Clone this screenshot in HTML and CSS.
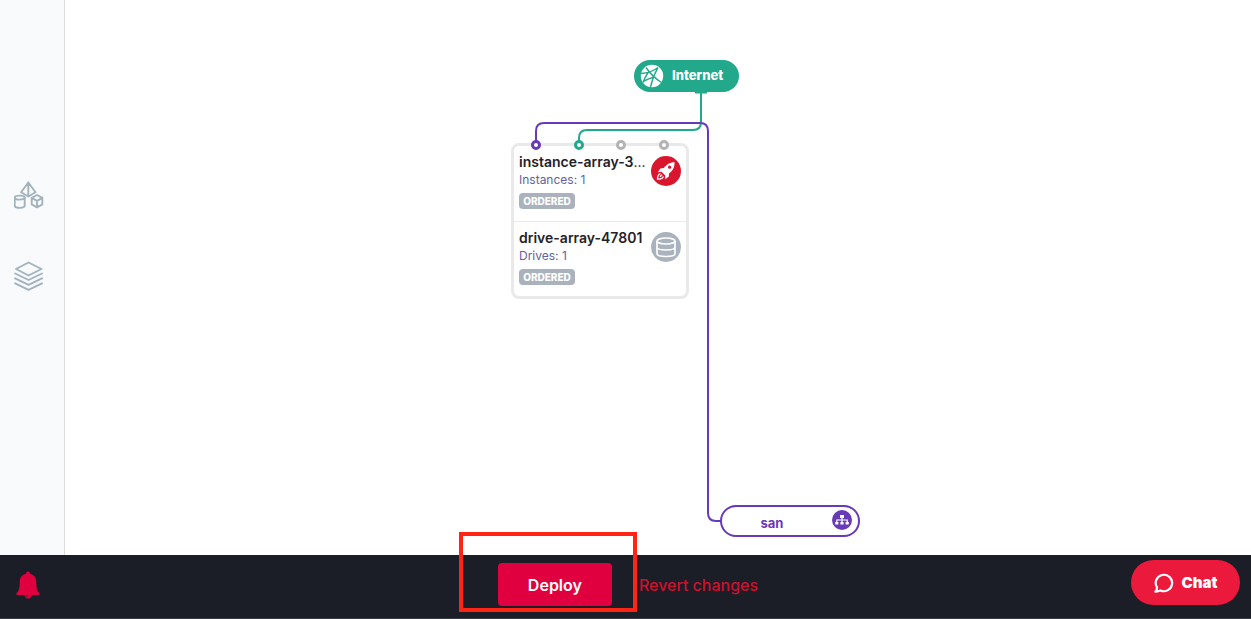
FILE: index.html
```
<!DOCTYPE html>
<html lang="en">
  <head>
    <meta charset="UTF-8" />
    <meta name="viewport" content="width=device-width, initial-scale=1.0" />
    <title>Infrastructure editor</title>
    <link rel="stylesheet" href="styles.css">
  </head>
  <body>
    <main class="workspace">
      <nav class="sidebar">
        <button type="button" class="tool" aria-label="Resources">
          <svg width="30" height="30" viewBox="0 0 30 30" fill="none" stroke="#a3b3bd" stroke-width="1.9" stroke-linejoin="round" stroke-linecap="round">
            <path d="M14.3 1.5L7.1 11.3L14.3 15.5L21.5 11.3ZM14.3 1.5V15.2" />
            <ellipse cx="5.7" cy="16.6" rx="5" ry="2" />
            <path d="M.7 16.6V24.6C.7 27.6 10.7 27.6 10.7 24.6V16.6" />
            <path d="M23 14L28.3 16.8V23.4L23 26.4L17.7 23.4V16.8ZM17.7 16.8L23 19.8L28.3 16.8M23 19.8V26.4" />
          </svg>
        </button>
        <button type="button" class="tool" aria-label="Layers">
          <svg width="30" height="30" viewBox="0 0 30 30" fill="none" stroke="#a3b3bd" stroke-width="1.9" stroke-linejoin="round" stroke-linecap="round">
            <path d="M14.5 1.5L27.5 8L14.5 14.5L2 8Z" />
            <path d="M1.2 12.5L14.5 19L28 12.5M1.2 17.3L14.5 23.8L28 17.3M1.2 22.3L14.5 28.8L28 22.3" />
          </svg>
        </button>
      </nav>

      <section class="canvas">
        <!-- connections between the nodes -->
        <svg class="links" width="820" height="555" fill="none" stroke-width="2">
          <path d="M630 92H642" stroke="#22a88b" stroke-width="3" />
          <path d="M636 92V122Q636 130 628 130H522Q514 130 514 138V145" stroke="#22a88b" />
          <path d="M471 145V131Q471 123 479 123H635Q643 123 643 131V513Q643 521 651 521H656" stroke="#673ab7" />
        </svg>

        <div class="node internet">
          <svg width="24" height="24" viewBox="0 0 24 24">
            <circle cx="12" cy="12" r="11.2" fill="#fff" />
            <path d="M1 9.5Q11 9 18 3.5M6 3.5Q12.5 13 21.5 18.5M18 3.5Q13 12 10.5 23M8.5 8Q5 13 3 18.5M3 17.5Q9 14.5 14 13" fill="none" stroke="#22a88b" stroke-width="1.4" />
          </svg>
          <span>Internet</span>
        </div>

        <div class="node server">
          <div class="item">
            <div class="info">
              <h2>instance-array-3<span class="more">...</span></h2>
              <p>Instances: 1</p>
              <span class="badge">ORDERED</span>
            </div>
            <svg class="icon" width="30" height="30" viewBox="0 0 30 30">
              <circle cx="15" cy="15" r="15" fill="#d9162e" />
              <path d="M23.5 6.2C18.5 6.2 15.5 8.5 12.8 12L9.3 12.5L6.8 16.2L10.5 15.8L14.3 19.5L14 23.2L17.7 20.7L18.2 17.2C21.7 14.5 23.8 11.5 23.5 6.2Z" fill="#fff" />
              <circle cx="18.6" cy="11.2" r="1.6" fill="#d9162e" />
              <path d="M9.5 17.5Q6.5 18.5 6.5 23.2Q11.5 23.3 12.5 20.5M9 20.8L11 18.8" fill="none" stroke="#fff" stroke-width="1.3" />
            </svg>
          </div>
          <div class="item">
            <div class="info">
              <h2>drive-array-47801</h2>
              <p>Drives: 1</p>
              <span class="badge">ORDERED</span>
            </div>
            <svg class="icon" width="30" height="30" viewBox="0 0 30 30">
              <circle cx="15" cy="15" r="15" fill="#a9b2bd" />
              <g fill="none" stroke="#fff" stroke-width="1.6">
                <ellipse cx="15" cy="9" rx="9" ry="3" />
                <path d="M6 9V21.5C6 25.5 24 25.5 24 21.5V9M6 15C6 19 24 19 24 15" />
              </g>
            </svg>
          </div>
          <span class="port port-san"></span>
          <span class="port port-wan"></span>
          <span class="port port-3"></span>
          <span class="port port-4"></span>
        </div>

        <div class="node san">
          <span>san</span>
          <svg width="20" height="20" viewBox="0 0 20 20">
            <circle cx="10" cy="10" r="10" fill="#673ab7" />
            <path d="M10 7V13M4.8 13V10H15.2V13" fill="none" stroke="#fff" stroke-width="1.2" />
            <path d="M8 5H12V8H8ZM3.2 12H6.4V14.6H3.2ZM8.4 12H11.6V14.6H8.4ZM13.6 12H16.8V14.6H13.6Z" fill="#fff" />
          </svg>
        </div>
      </section>
    </main>

    <footer class="footer">
      <button type="button" class="bell" aria-label="Notifications">
        <svg width="24" height="28" viewBox="0 0 24 28">
          <path d="M12 .5C13.3 .5 14 1.4 13.9 2.8C18.5 3.8 20.3 7.2 20.3 11.5C20.3 18 21.5 20.5 23.5 22.2C24.2 23.3 23.6 24 22.5 24H1.5C.4 24-.2 23.3.5 22.2C2.5 20.5 3.7 18 3.7 11.5C3.7 7.2 5.5 3.8 10.1 2.8C10 1.4 10.7 .5 12 .5Z" fill="#e0003f" />
          <circle cx="12" cy="24.4" r="3.1" fill="#e0003f" />
          <path d="M10.3 24Q10.5 25.8 12 26" fill="none" stroke="#1b1e27" />
        </svg>
      </button>
      <div class="actions">
        <div class="deploy-wrap">
          <button type="button" class="deploy">Deploy</button>
          <div class="highlight"></div>
        </div>
        <button type="button" class="revert">Revert changes</button>
      </div>
      <button type="button" class="chat">
        <svg width="20" height="20" viewBox="0 0 20 20" fill="none" stroke="#fff" stroke-width="2.2" stroke-linejoin="round">
          <path d="M3 14.4A8.2 8.2 0 1 1 6.4 17.4Q4 18.8 1.4 18.6Q3.2 16.8 3 14.4Z" />
        </svg>
        Chat
      </button>
    </footer>
  </body>
</html>
```
FILE: styles.css
```
* {
  box-sizing: border-box;
}
body {
  margin: 0;
  min-height: 100vh;
  display: flex;
  flex-direction: column;
  font-family: "Inter", sans-serif;
  background-color: #fff;
}
button {
  padding: 0;
  border: none;
  background: none;
  font-family: inherit;
  cursor: pointer;
}
svg {
  display: block;
  flex-shrink: 0;
}
.workspace {
  flex: 1;
  display: flex;
}
.sidebar {
  display: flex;
  flex-direction: column;
  align-items: flex-start;
  gap: 50px;
  width: 65px;
  padding: 181px 0 0 14px;
  background-color: #f8fafc;
  border-right: 1px solid #d9dbdd;
}
.canvas {
  position: relative;
  flex: 1;
  overflow: hidden;
}
.links {
  position: absolute;
  top: 0;
  left: 0;
}
.node {
  position: absolute;
}
.internet {
  top: 60px;
  left: 569px;
  display: flex;
  align-items: center;
  gap: 8px;
  height: 32px;
  padding: 0 16px 0 6px;
  border-radius: 16px;
  background-color: #22a88b;
  color: #fff;
  font-size: 13px;
  font-weight: 800;
}
.internet span {
  padding-bottom: 3px;
}
.server {
  top: 143px;
  left: 446px;
  width: 178px;
  border: 3px solid #e9e9e9;
  border-radius: 8px;
  background-color: #fff;
}
.item {
  display: flex;
  justify-content: space-between;
  height: 75px;
  padding: 7px 5px 0;
}
.item + .item {
  border-top: 1px solid #e9e9e9;
}
.info {
  width: 130px;
}
.info h2 {
  margin: 0;
  white-space: nowrap;
  color: #1f2227;
  font-size: 14px;
  font-weight: 600;
  line-height: 18px;
}
.info .more {
  font-weight: 400;
}
.info p {
  margin: 0 0 4px;
  color: #62629c;
  font-size: 12px;
  line-height: 18px;
}
.icon {
  margin-top: 3px;
}
.badge {
  display: block;
  width: 56px;
  border-radius: 4px;
  background-color: #a9b2bd;
  color: #fff;
  font-size: 10px;
  font-weight: 800;
  line-height: 16px;
  text-align: center;
}
.port {
  position: absolute;
  top: -6px;
  width: 10px;
  height: 10px;
  border: 3px solid #b3b3b3;
  border-radius: 50%;
  background-color: #fff;
}
.port-san {
  left: 17px;
  border-color: #673ab7;
}
.port-wan {
  left: 60px;
  border-color: #22a88b;
}
.port-3 {
  left: 102px;
}
.port-4 {
  left: 145px;
}
.san {
  top: 505px;
  left: 655px;
  display: flex;
  align-items: center;
  width: 140px;
  height: 32px;
  padding: 0 6px 2px 10px;
  border: 2px solid #673ab7;
  border-radius: 16px;
  background-color: #fff;
  color: #673ab7;
  font-size: 13px;
  font-weight: 700;
}
.san span {
  flex: 1;
  padding: 6px 20px 0 0;
  text-align: center;
}
.footer {
  display: grid;
  grid-template-columns: 1fr auto 1fr;
  align-items: center;
  height: 64px;
  padding: 0 11px 4px 16px;
  background-color: #1b1e27;
  border-bottom: 1px solid #3a3d45;
}
.bell {
  justify-self: start;
}
.actions {
  display: flex;
  align-items: center;
  gap: 27px;
}
.deploy-wrap {
  position: relative;
}
.deploy {
  width: 114px;
  height: 43px;
  border-radius: 4px;
  background-color: #e0003f;
  color: #fff;
  font-size: 16px;
  font-weight: 600;
}
.highlight {
  position: absolute;
  top: -31px;
  left: -39px;
  width: 178px;
  height: 80px;
  border: 4px solid #ff2414;
  pointer-events: none;
}
.revert {
  color: #cf102d;
  font-size: 16px;
  font-weight: 500;
}
.chat {
  justify-self: end;
  align-self: start;
  display: flex;
  align-items: center;
  justify-content: center;
  gap: 8px;
  width: 109px;
  height: 45px;
  margin-top: 5px;
  border-radius: 23px;
  background-color: #eb1a3d;
  color: #fff;
  font-size: 15px;
  font-weight: 900;
}
```
